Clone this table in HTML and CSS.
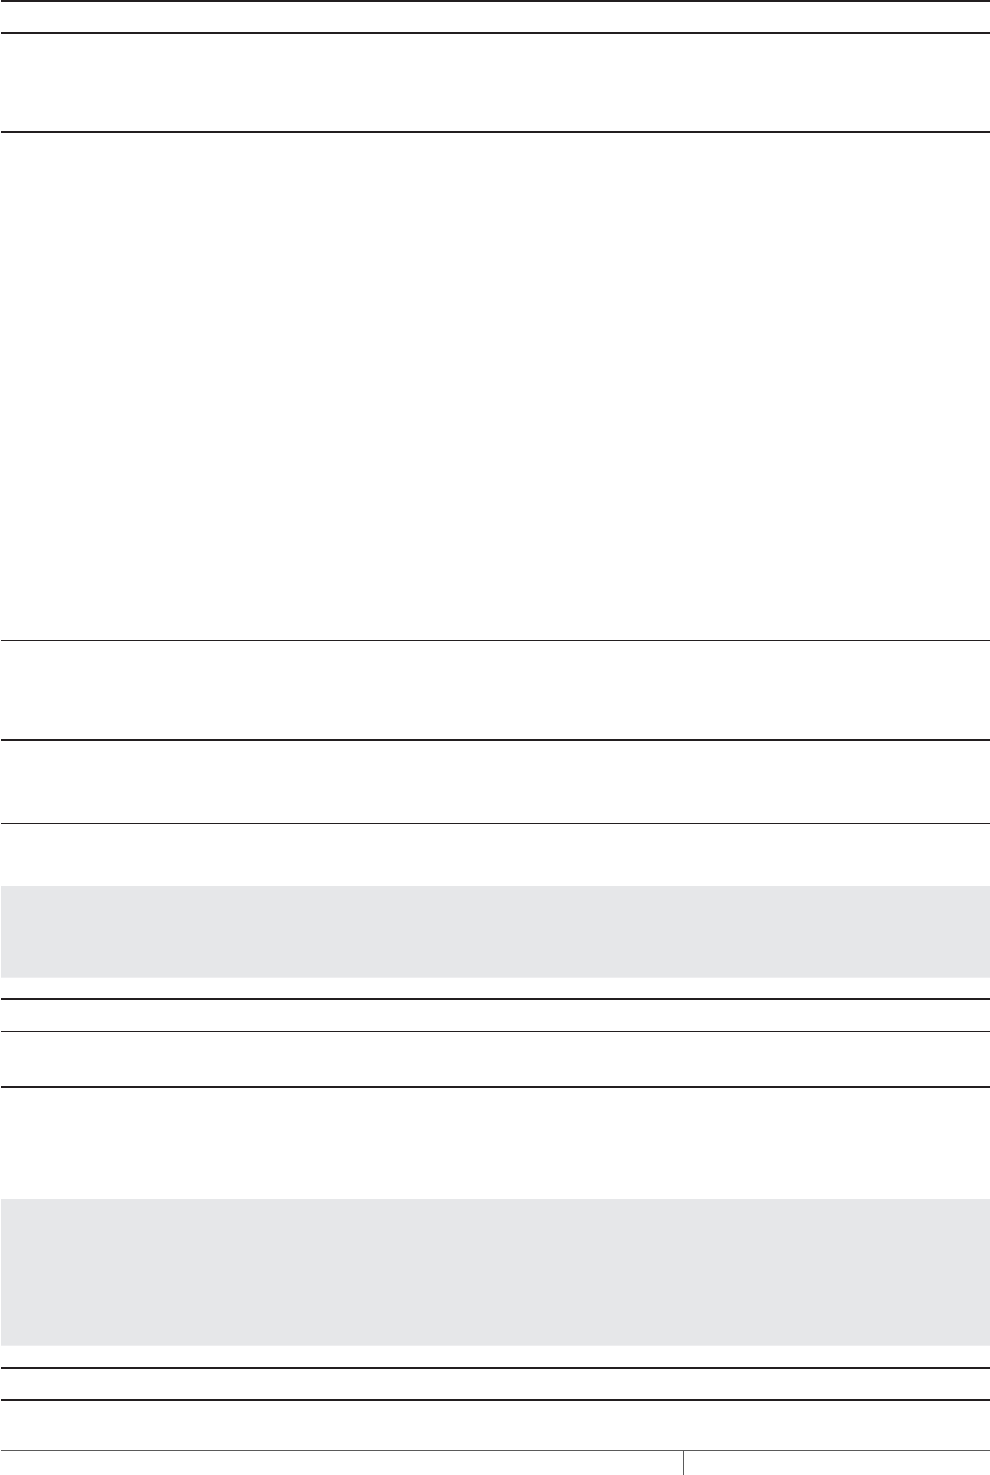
FILE: index.html
```html
<!DOCTYPE html>
<html lang="en">
<head>
<meta charset="utf-8">
<title>Sheet</title>
<link rel="stylesheet" href="styles.css">
</head>
<body>
<main class="sheet">
  <div class="rule thick"></div>
  <div class="band h30"></div>
  <div class="rule thick"></div>
  <div class="band h97"></div>
  <div class="rule thick"></div>
  <div class="band h507"></div>
  <div class="rule thin"></div>
  <div class="band h98"></div>
  <div class="rule thick"></div>
  <div class="band h82"></div>
  <div class="rule thin"></div>
  <div class="band h62"></div>
  <div class="panel h92"></div>
  <div class="band h20"></div>
  <div class="rule thick"></div>
  <div class="band h31"></div>
  <div class="rule thin"></div>
  <div class="band h54"></div>
  <div class="rule thick"></div>
  <div class="band h111"></div>
  <div class="panel h147"></div>
  <div class="band h21"></div>
  <div class="rule thick"></div>
  <div class="band h30"></div>
  <div class="rule thick"></div>
  <div class="band h49"></div>
  <div class="footer">
    <div class="footer-left"></div>
    <div class="footer-right"></div>
  </div>
</main>
</body>
</html>
```

FILE: styles.css
```css
html, body {
  margin: 0;
  padding: 0;
  background: #ffffff;
  font-family: "Liberation Sans", Arial, sans-serif;
}

.sheet {
  margin-left: 1px;
  width: 989px;
  display: flex;
  flex-direction: column;
}

.rule {
  width: 100%;
  background: #231f20;
}

.rule.thick { height: 2px; }
.rule.thin { height: 1px; }

.band { width: 100%; }

.panel {
  width: 100%;
  box-sizing: border-box;
  background: #e6e7e9;
  border-bottom: 1px solid #eeeef0;
}

.h20 { height: 20px; }
.h21 { height: 21px; }
.h30 { height: 30px; }
.h31 { height: 31px; }
.h49 { height: 49px; }
.h54 { height: 54px; }
.h62 { height: 62px; }
.h82 { height: 82px; }
.h92 { height: 92px; }
.h97 { height: 97px; }
.h98 { height: 98px; }
.h111 { height: 111px; }
.h147 { height: 147px; }
.h507 { height: 507px; }

.footer {
  display: flex;
  border-top: 1px solid #5a5a5a;
  height: 25px;
}

.footer-left {
  width: 682px;
  border-right: 1px solid #5a5a5a;
}

.footer-right {
  flex: 1;
}
```
